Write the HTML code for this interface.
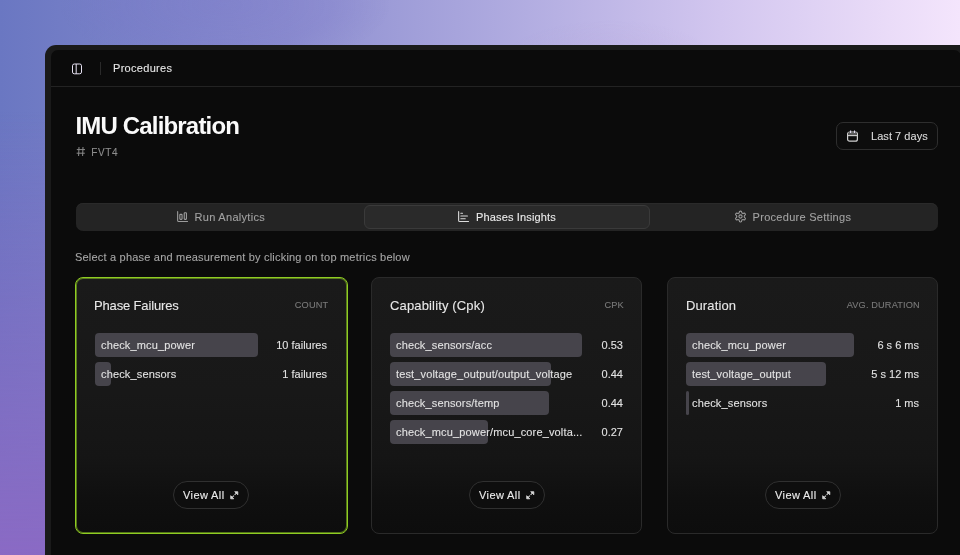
<!DOCTYPE html>
<html><head><meta charset="utf-8">
<style>
*{box-sizing:border-box;margin:0;padding:0}
html,body{width:960px;height:555px;overflow:hidden}
body{position:relative;font-family:"Liberation Sans",sans-serif;
background:linear-gradient(90deg,#6a77c2 0%,#8d8fd0 30%,#b2ade1 55%,#d2c6ef 75%,#f4e5fc 100%);}
.bgv{position:absolute;left:0;top:0;width:960px;height:555px;
background:linear-gradient(180deg,rgba(138,106,196,0) 0%,rgba(138,106,196,0.0) 20%,rgba(138,106,196,1) 100%);}
.frame{position:absolute;left:45px;top:45px;width:960px;height:560px;background:#1a1a1a;border-radius:11px}
.panel{position:absolute;left:51px;top:50px;width:910px;height:560px;background:#0b0b0b;border-radius:7px 7px 0 0}
.hline{position:absolute;left:51px;top:86px;width:909px;height:1px;background:#232323}
.t{position:absolute;white-space:nowrap;line-height:1;-webkit-text-stroke:0.1px currentColor}
.lbl,.val{-webkit-text-stroke:0.1px currentColor}
svg{position:absolute;overflow:visible}
.btn{position:absolute;left:836px;top:122px;width:102px;height:28px;border:1px solid #2e2e2e;border-radius:7px;background:#0d0d0d}
.tabs{position:absolute;left:76px;top:203px;width:862px;height:28px;border-radius:7px;background:#242424;box-shadow:inset 0 1px 0 #2a2a2a}
.tab-act{position:absolute;left:364px;top:205px;width:286px;height:24px;border-radius:6px;background:#2a2a2a;border:1px solid #3a3a3a}
.card{position:absolute;top:277px;height:257px;border-radius:8px;border:1px solid #2a2a2a;
background:linear-gradient(180deg,#1a1a1a 0%,#181818 45%,#151515 70%,#0f0f0f 88%,#0d0d0d 100%)}
.card.sel{border:1px solid #8fcc22;box-shadow:inset 0 0 0 1px rgba(143,204,34,0.55)}
.ch{position:absolute;top:0;white-space:nowrap;line-height:1}
.row{position:absolute;height:24px}
.bar{position:absolute;left:0;top:0;height:24px;background:#46444b;border-radius:4px}
.lbl{position:absolute;left:6px;top:0;line-height:24px;font-size:11px;color:#e2e2e2;white-space:nowrap;letter-spacing:0.15px}
.val{position:absolute;right:0;top:0;line-height:24px;font-size:11px;color:#e2e2e2;white-space:nowrap;text-align:right}
.pill{position:absolute;top:481px;width:76px;height:28px;border-radius:14px;border:1px solid #303030;background:#0e0e0e}
</style></head><body><div style="position:absolute;left:0;top:0;width:960px;height:555px;will-change:transform">
<div class="bgv"></div>
<div style="position:absolute;left:60px;top:-60px;width:330px;height:130px;border-radius:50%;background:radial-gradient(closest-side,rgba(120,116,200,0.3),rgba(120,116,200,0.22) 65%,rgba(120,116,200,0) 100%)"></div>
<div style="position:absolute;left:500px;top:20px;width:220px;height:90px;border-radius:50%;background:radial-gradient(closest-side,rgba(180,160,215,0.22),rgba(180,160,215,0) 100%)"></div>
<div class="frame"></div>
<div class="panel"></div>
<div class="hline"></div>

<!-- header -->
<svg style="left:71px;top:63px" width="12" height="12" viewBox="0 0 12 12">
  <rect x="1.5" y="1" width="9" height="9.8" rx="1.8" fill="none" stroke="#e6e1f2" stroke-width="1"/>
  <line x1="5.2" y1="1" x2="5.2" y2="10.8" stroke="#e6e1f2" stroke-width="1"/>
</svg>
<div style="position:absolute;left:100px;top:62px;width:1px;height:13px;background:#2a2a2a"></div>
<div class="t" style="left:113px;top:62.7px;font-size:11px;color:#e6e6e6;letter-spacing:0.3px">Procedures</div>

<!-- title -->
<div class="t" style="left:75.4px;top:113.6px;font-size:24px;font-weight:bold;color:#fafafa;letter-spacing:-0.82px;-webkit-text-stroke:0">IMU Calibration</div>
<svg style="left:76px;top:146px" width="10" height="11" viewBox="0 0 10 11">
  <line x1="3" y1="1" x2="2.6" y2="10" stroke="#8a8a8a" stroke-width="1"/>
  <line x1="7" y1="1" x2="6.6" y2="10" stroke="#8a8a8a" stroke-width="1"/>
  <line x1="0.8" y1="3.6" x2="9" y2="3.6" stroke="#8a8a8a" stroke-width="1"/>
  <line x1="0.6" y1="7.2" x2="8.8" y2="7.2" stroke="#8a8a8a" stroke-width="1"/>
</svg>
<div class="t" style="left:91.3px;top:147.5px;font-size:10px;color:#8e8e8e;letter-spacing:0.6px;-webkit-text-stroke:0.1px #8e8e8e">FVT4</div>

<!-- date button -->
<div class="btn"></div>
<svg style="left:846px;top:130px" width="13" height="13" viewBox="0 0 13 13">
  <rect x="1.6" y="2" width="9.8" height="9.2" rx="2" fill="none" stroke="#cfcfcf" stroke-width="1.2"/>
  <rect x="2.2" y="2.6" width="8.6" height="3" fill="#5a5a5a"/>
  <line x1="1.6" y1="5.6" x2="11.4" y2="5.6" stroke="#cfcfcf" stroke-width="1.1"/>
  <line x1="4.6" y1="0.5" x2="4.6" y2="3" stroke="#e0dcf0" stroke-width="1.1"/>
  <line x1="8.5" y1="0.5" x2="8.5" y2="3" stroke="#e0dcf0" stroke-width="1.1"/>
</svg>
<div class="t" style="left:871px;top:131px;font-size:11px;color:#dcdcdc;letter-spacing:0.05px">Last 7 days</div>

<!-- tabs -->
<div class="tabs"></div>
<div class="tab-act"></div>
<svg style="left:175.7px;top:210.4px" width="13.2" height="13.2" viewBox="0 0 24 24">
  <path d="M3 3v16a2 2 0 0 0 2 2h16" fill="none" stroke="#9c9c9c" stroke-width="2" stroke-linecap="round"/>
  <rect x="15" y="5" width="4" height="12" rx="1" fill="none" stroke="#9c9c9c" stroke-width="2"/>
  <rect x="7" y="8" width="4" height="9" rx="1" fill="none" stroke="#9c9c9c" stroke-width="2"/>
</svg>
<div class="t" style="left:194.5px;top:211.7px;font-size:11px;color:#a2a2a2;letter-spacing:0.3px">Run Analytics</div>
<svg style="left:456.5px;top:210.2px" width="13.2" height="13.2" viewBox="0 0 24 24">
  <path d="M3 3v16a2 2 0 0 0 2 2h16" fill="none" stroke="#dcdcdc" stroke-width="2" stroke-linecap="round"/>
  <path d="M7 16h8M7 11h12M7 6h3" fill="none" stroke="#dcdcdc" stroke-width="2" stroke-linecap="round"/>
</svg>
<div class="t" style="left:476px;top:211.7px;font-size:11px;color:#ececec;letter-spacing:0.15px">Phases Insights</div>
<svg style="left:734px;top:210.4px" width="13" height="13" viewBox="0 0 24 24">
  <path d="M12.22 2h-.44a2 2 0 0 0-2 2v.18a2 2 0 0 1-1 1.73l-.43.25a2 2 0 0 1-2 0l-.15-.08a2 2 0 0 0-2.730.73l-.22.38a2 2 0 0 0 .73 2.73l.15.1a2 2 0 0 1 1 1.72v.51a2 2 0 0 1-1 1.74l-.15.09a2 2 0 0 0-.73 2.73l.22.38a2 2 0 0 0 2.73.73l.15-.08a2 2 0 0 1 2 0l.43.25a2 2 0 0 1 1 1.73V20a2 2 0 0 0 2 2h.44a2 2 0 0 0 2-2v-.18a2 2 0 0 1 1-1.73l.43-.25a2 2 0 0 1 2 0l.15.08a2 2 0 0 0 2.73-.73l.22-.39a2 2 0 0 0-.73-2.73l-.15-.08a2 2 0 0 1-1-1.74v-.5a2 2 0 0 1 1-1.74l.15-.09a2 2 0 0 0 .73-2.73l-.22-.38a2 2 0 0 0-2.73-.73l-.15.08a2 2 0 0 1-2 0l-.43-.25a2 2 0 0 1-1-1.73V4a2 2 0 0 0-2-2z" fill="none" stroke="#9c9c9c" stroke-width="2" stroke-linejoin="round"/>
  <circle cx="12" cy="12" r="3" fill="none" stroke="#9c9c9c" stroke-width="2"/>
</svg>
<div class="t" style="left:752.6px;top:211.7px;font-size:11px;color:#a2a2a2;letter-spacing:0.28px">Procedure Settings</div>

<div class="t" style="left:75px;top:251.7px;font-size:11px;color:#a6a6a6;letter-spacing:0.2px">Select a phase and measurement by clicking on top metrics below</div>

<!-- card 1 -->
<div class="card sel" style="left:75px;width:273px"></div>
<div class="t" style="left:94px;top:299.3px;font-size:13px;color:#e8e8e8;letter-spacing:-0.15px">Phase Failures</div>
<div class="t" style="left:294.8px;top:300.6px;font-size:9.2px;color:#7a7a7a;letter-spacing:0.15px;width:33px;text-align:right">COUNT</div>
<div class="row" style="left:95px;top:333px;width:232px">
  <div class="bar" style="width:163px"></div><div class="lbl">check_mcu_power</div><div class="val">10 failures</div>
</div>
<div class="row" style="left:95px;top:362px;width:232px">
  <div class="bar" style="width:16px"></div><div class="lbl">check_sensors</div><div class="val">1 failures</div>
</div>
<div class="pill" style="left:173px"></div>
<svg style="left:230px;top:490.6px" width="9" height="9" viewBox="0 0 9 9">
  <path d="M4.7 0.7 H7.8 V3.8 Z" fill="#dadada" stroke="#dadada" stroke-width="0.8" stroke-linejoin="round"/>
  <path d="M0.7 4.7 V7.8 H3.8 Z" fill="#dadada" stroke="#dadada" stroke-width="0.8" stroke-linejoin="round"/>
  <line x1="6.6" y1="1.9" x2="4.6" y2="3.9" stroke="#d0d0d0" stroke-width="1.1"/>
  <line x1="1.9" y1="6.6" x2="3.9" y2="4.6" stroke="#d0d0d0" stroke-width="1.1"/>
</svg>
<div class="t" style="left:183px;top:490.4px;font-size:11px;color:#ececec;letter-spacing:0.4px">View All</div>

<!-- card 2 -->
<div class="card" style="left:371px;width:271px"></div>
<div class="t" style="left:390px;top:299.3px;font-size:13px;color:#e8e8e8;letter-spacing:0.15px">Capability (Cpk)</div>
<div class="t" style="left:590.8px;top:300.6px;font-size:9.2px;color:#7a7a7a;letter-spacing:0.15px;width:33px;text-align:right">CPK</div>
<div class="row" style="left:390px;top:333px;width:233px">
  <div class="bar" style="width:192px"></div><div class="lbl">check_sensors/acc</div><div class="val">0.53</div>
</div>
<div class="row" style="left:390px;top:362px;width:233px">
  <div class="bar" style="width:161px"></div><div class="lbl">test_voltage_output/output_voltage</div><div class="val">0.44</div>
</div>
<div class="row" style="left:390px;top:391px;width:233px">
  <div class="bar" style="width:159px"></div><div class="lbl">check_sensors/temp</div><div class="val">0.44</div>
</div>
<div class="row" style="left:390px;top:420px;width:233px">
  <div class="bar" style="width:98px"></div><div class="lbl">check_mcu_power/mcu_core_volta...</div><div class="val">0.27</div>
</div>
<div class="pill" style="left:469px"></div>
<svg style="left:526px;top:490.6px" width="9" height="9" viewBox="0 0 9 9">
  <path d="M4.7 0.7 H7.8 V3.8 Z" fill="#dadada" stroke="#dadada" stroke-width="0.8" stroke-linejoin="round"/>
  <path d="M0.7 4.7 V7.8 H3.8 Z" fill="#dadada" stroke="#dadada" stroke-width="0.8" stroke-linejoin="round"/>
  <line x1="6.6" y1="1.9" x2="4.6" y2="3.9" stroke="#d0d0d0" stroke-width="1.1"/>
  <line x1="1.9" y1="6.6" x2="3.9" y2="4.6" stroke="#d0d0d0" stroke-width="1.1"/>
</svg>
<div class="t" style="left:479px;top:490.4px;font-size:11px;color:#ececec;letter-spacing:0.4px">View All</div>

<!-- card 3 -->
<div class="card" style="left:667px;width:271px"></div>
<div class="t" style="left:686px;top:299.3px;font-size:13px;color:#e8e8e8;letter-spacing:0.12px">Duration</div>
<div class="t" style="left:819.8px;top:300.6px;font-size:9.2px;color:#7a7a7a;letter-spacing:0.15px;width:100px;text-align:right">AVG. DURATION</div>
<div class="row" style="left:686px;top:333px;width:233px">
  <div class="bar" style="width:168px"></div><div class="lbl">check_mcu_power</div><div class="val">6 s 6 ms</div>
</div>
<div class="row" style="left:686px;top:362px;width:233px">
  <div class="bar" style="width:140px"></div><div class="lbl">test_voltage_output</div><div class="val">5 s 12 ms</div>
</div>
<div class="row" style="left:686px;top:391px;width:233px">
  <div class="bar" style="width:3px;border-radius:1.5px"></div><div class="lbl">check_sensors</div><div class="val">1 ms</div>
</div>
<div class="pill" style="left:765px"></div>
<svg style="left:822px;top:490.6px" width="9" height="9" viewBox="0 0 9 9">
  <path d="M4.7 0.7 H7.8 V3.8 Z" fill="#dadada" stroke="#dadada" stroke-width="0.8" stroke-linejoin="round"/>
  <path d="M0.7 4.7 V7.8 H3.8 Z" fill="#dadada" stroke="#dadada" stroke-width="0.8" stroke-linejoin="round"/>
  <line x1="6.6" y1="1.9" x2="4.6" y2="3.9" stroke="#d0d0d0" stroke-width="1.1"/>
  <line x1="1.9" y1="6.6" x2="3.9" y2="4.6" stroke="#d0d0d0" stroke-width="1.1"/>
</svg>
<div class="t" style="left:775px;top:490.4px;font-size:11px;color:#ececec;letter-spacing:0.4px">View All</div>

</div></body></html>
